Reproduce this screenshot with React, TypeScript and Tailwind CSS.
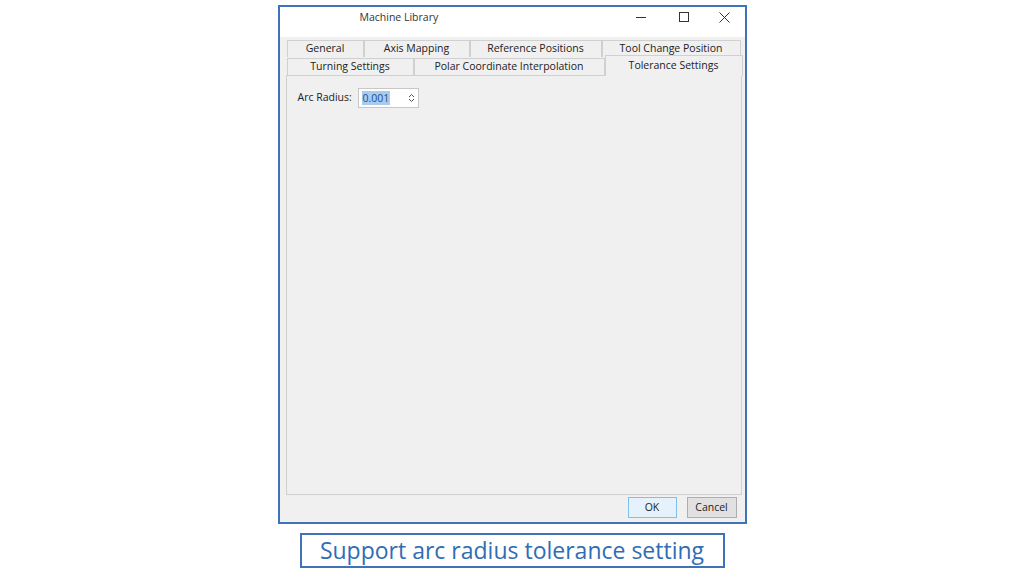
export default function App() {
  const f = { fontFamily: '"Segoe UI","Open Sans","Noto Sans",sans-serif' };
  const tab = "flex items-center justify-center h-[17px] border border-[#d0d0d0] border-b-0 bg-[#f0f0f0] text-[10.5px] text-[#222]";
  return (
    <div className="w-[1024px] h-[576px] bg-white flex flex-col items-center" style={f}>
      <div className="mt-[5px] w-[469px] h-[519px] border-2 border-[#3f72b8] bg-[#f0f0f0] flex flex-col">
        <div className="h-[30px] flex items-start pt-[2px] bg-white">
          <div className="ml-[80px] text-[10.5px] text-[#333] flex-1 leading-[16px]">Machine Library</div>
          <div className="flex items-center text-[#333] h-[16px]">
            <div className="w-[44px] flex justify-center"><div className="w-[10px] h-px bg-[#333]" /></div>
            <div className="w-[42px] flex justify-center"><div className="w-[10px] h-[10px] border border-[#333]" /></div>
            <div className="w-[40px] flex justify-center">
              <svg width="11" height="11" viewBox="0 0 11 11"><path d="M0.5 0.5L10.5 10.5M10.5 0.5L0.5 10.5" stroke="#333" strokeWidth="1" /></svg>
            </div>
          </div>
        </div>
        <div className="flex-1 flex flex-col px-[6px] pt-[3px]">
          <div className="flex w-[454px] ml-[1px]">
            <div className={tab + " w-[77px]"}>General</div>
            <div className={tab + " w-[106px]"}>Axis Mapping</div>
            <div className={tab + " w-[132px]"}>Reference Positions</div>
            <div className={tab + " w-[139px]"}>Tool Change Position</div>
          </div>
          <div className="flex items-end w-[457px] h-[18px] ml-[1px]">
            <div className={tab + " w-[127px]"}>Turning Settings</div>
            <div className={tab + " w-[191px]"}>Polar Coordinate Interpolation</div>
            <div className="flex items-center justify-center w-[138px] h-[21px] border border-[#d0d0d0] border-b-0 bg-[#f0f0f0] text-[10.5px] text-[#222] relative top-[1px] z-10">Tolerance Settings</div>
          </div>
          <div className="w-[456px] h-[420px] border border-[#d0d0d0] bg-[#f0f0f0] flex flex-col">
            <div className="flex items-center mt-[12px] ml-[11px]">
              <span className="text-[10.5px] text-[#222] w-[60px]">Arc Radius:</span>
              <div className="w-[61px] h-[20px] bg-white border border-[#c8c8c8] flex items-center">
                <span className="ml-[3px] text-[10.5px] bg-[#a9cbf0] text-[#1d4f91] leading-[14px] px-[1px]">0.001</span>
                <div className="ml-auto mr-[3px] flex flex-col items-center">
                  <svg width="7" height="5" viewBox="0 0 7 5"><path d="M1 4L3.5 1.5L6 4" stroke="#555" fill="none" /></svg>
                  <svg width="7" height="5" viewBox="0 0 7 5"><path d="M1 1L3.5 3.5L6 1" stroke="#555" fill="none" /></svg>
                </div>
              </div>
            </div>
          </div>
          <div className="flex justify-end gap-[10px] mt-[2px] mr-[2px]">
            <div className="w-[49px] h-[21px] bg-[#e5f1fb] border border-[#7ec0ec] text-[10.5px] flex items-center justify-center text-[#222]">OK</div>
            <div className="w-[50px] h-[21px] bg-[#e1e1e1] border border-[#adadad] text-[10.5px] flex items-center justify-center text-[#222]">Cancel</div>
          </div>
        </div>
      </div>
      <div className="mt-[9px] w-[425px] h-[35px] border-2 border-[#3f72b8] flex items-center justify-center text-[23px] text-[#2f6db5]" style={{ fontFamily: '"Open Sans",Lato,sans-serif' }}>
        Support arc radius tolerance setting
      </div>
    </div>
  );
}
